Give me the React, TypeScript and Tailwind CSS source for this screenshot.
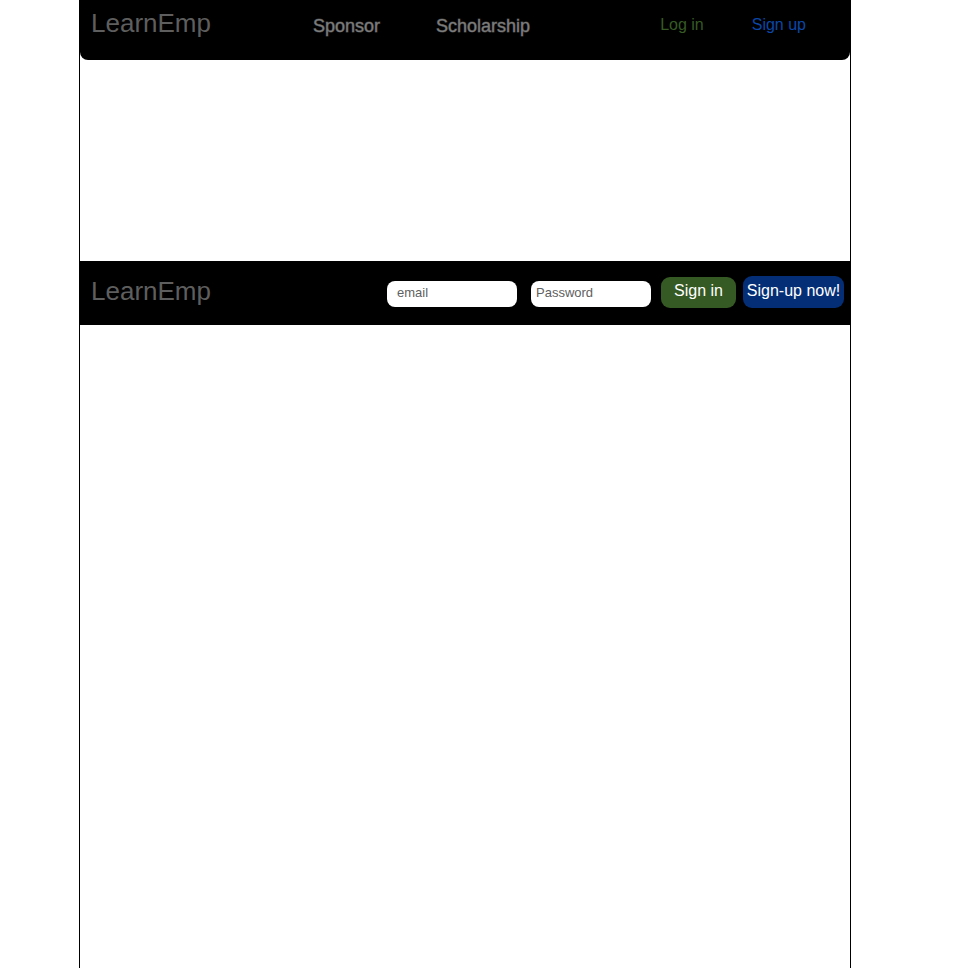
import React from "react";

function Logo() {
  return (
    <a href="#" className="text-[26px] leading-[30px] text-[#5e5e5e]">
      LearnEmp
    </a>
  );
}

function TopBar() {
  return (
    <header className="flex h-15 items-start rounded-b-lg bg-black pl-[11px] pr-11 pt-2">
      <Logo />
      <nav className="ml-[102px] flex gap-14 pt-1 text-lg leading-7 text-[#7c7c7c] [-webkit-text-stroke:1px_#7c7c7c80]">
        <a href="#sponsor">Sponsor</a>
        <a href="#scholarship">Scholarship</a>
      </nav>
      <div className="ml-auto flex gap-12 pt-1 text-base leading-[26px]">
        <a href="#login" className="text-[#365a24]">
          Log in
        </a>
        <a href="#signup" className="text-[#0a47a9]">
          Sign up
        </a>
      </div>
    </header>
  );
}

function SignInBar() {
  return (
    <section className="flex h-16 items-start bg-black pl-[11px] pr-1.5 pt-[15px]">
      <Logo />
      <form className="ml-auto flex items-start">
        <input
          type="email"
          aria-label="email"
          placeholder="email"
          className="mr-3.5 mt-[5px] h-[26px] w-[130px] rounded-lg bg-white pb-1 pl-2.5 text-[13px] leading-5 text-[#606060] placeholder:text-[#606060]"
        />
        <input
          type="password"
          aria-label="Password"
          placeholder="Password"
          className="mr-2.5 mt-[5px] h-[26px] w-[120px] rounded-lg bg-white pb-1 pl-[5px] text-[13px] leading-5 text-[#606060] placeholder:text-[#606060]"
        />
        <button
          type="submit"
          className="mr-[7px] mt-px h-[31px] w-[75px] rounded-[9px] bg-[#365a24] pb-1 text-base text-white"
        >
          Sign in
        </button>
        <button
          type="button"
          className="h-8 w-[101px] whitespace-nowrap rounded-[9px] bg-[#042f76] pb-0.5 text-base text-white"
        >
          Sign-up now!
        </button>
      </form>
    </section>
  );
}

export default function App() {
  return (
    <div className="min-h-screen bg-white pl-[79px] pr-[109px] font-['Liberation_Sans',Arial,sans-serif]">
      <main className="min-h-screen border-x border-black">
        <TopBar />
        <div className="h-[201px]" />
        <SignInBar />
      </main>
    </div>
  );
}
